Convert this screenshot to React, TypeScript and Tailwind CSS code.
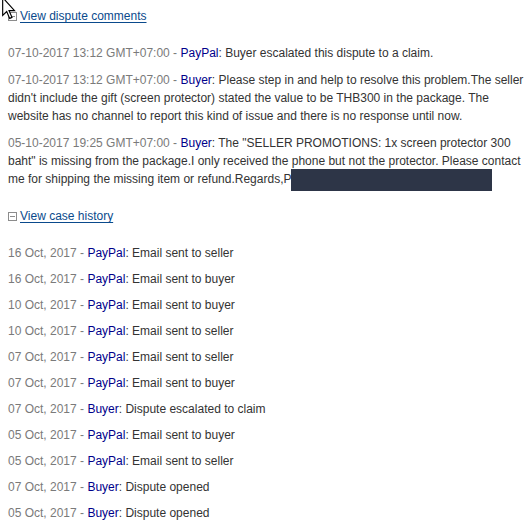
import React from 'react';

type Entry = { date: string; who: 'PayPal' | 'Buyer'; text: string };

const COMMENTS: Entry[] = [
  { date: '07-10-2017 13:12 GMT+07:00', who: 'PayPal', text: 'Buyer escalated this dispute to a claim.' },
  {
    date: '07-10-2017 13:12 GMT+07:00',
    who: 'Buyer',
    text: 'Please step in and help to resolve this problem.The seller didn\'t include the gift (screen protector) stated the value to be THB300 in the package. The website has no channel to report this kind of issue and there is no response until now.',
  },
];

const HISTORY: Entry[] = [
  { date: '16 Oct, 2017', who: 'PayPal', text: 'Email sent to seller' },
  { date: '16 Oct, 2017', who: 'PayPal', text: 'Email sent to buyer' },
  { date: '10 Oct, 2017', who: 'PayPal', text: 'Email sent to buyer' },
  { date: '10 Oct, 2017', who: 'PayPal', text: 'Email sent to seller' },
  { date: '07 Oct, 2017', who: 'PayPal', text: 'Email sent to seller' },
  { date: '07 Oct, 2017', who: 'PayPal', text: 'Email sent to buyer' },
  { date: '07 Oct, 2017', who: 'Buyer', text: 'Dispute escalated to claim' },
  { date: '05 Oct, 2017', who: 'PayPal', text: 'Email sent to buyer' },
  { date: '05 Oct, 2017', who: 'PayPal', text: 'Email sent to seller' },
  { date: '07 Oct, 2017', who: 'Buyer', text: 'Dispute opened' },
  { date: '05 Oct, 2017', who: 'Buyer', text: 'Dispute opened' },
];

const Prefix: React.FC<{ e: Entry }> = ({ e }) => (
  <>
    <span className="text-[#7a7a7a]">{e.date} - </span>
    <span className="text-[#00008b]">{e.who}</span>
    <span>: </span>
  </>
);

const ToggleLink: React.FC<{ label: string }> = ({ label }) => (
  <div className="flex items-center h-[18px]">
    <span className="w-[9px] h-[9px] border border-[#8c8c8c] bg-white flex items-center justify-center mr-[3px]">
      <span className="w-[5px] h-px bg-[#8c8c8c]" />
    </span>
    <a href="#" className="text-[#0a4a8c] underline underline-offset-[2px]">{label}</a>
  </div>
);

const Cursor: React.FC = () => (
  <svg className="absolute left-[2px] top-[-3px]" width="14" height="23" viewBox="0 0 12 20">
    <path d="M0.5 0.5 L0.5 16 L4 12.6 L6.6 18.6 L8.6 17.7 L6 11.8 L10.8 11.8 Z" fill="#fff" stroke="#000" strokeWidth="1" strokeLinejoin="miter" />
  </svg>
);

export default function App() {
  return (
    <div className="relative w-[532px] h-[521px] overflow-hidden bg-white text-[12px] leading-[18px] text-[#333] font-['Liberation_Sans',Arial,sans-serif] pl-2 pr-1 pt-[7px]">
      <Cursor />
      <ToggleLink label="View dispute comments" />

      <div className="mt-[19px]">
        {COMMENTS.map((c, i) => (
          <p key={i} className="mb-[9px]">
            <Prefix e={c} />
            {c.text}
          </p>
        ))}
        <p>
          <Prefix e={{ date: '05-10-2017 19:25 GMT+07:00', who: 'Buyer', text: '' }} />
          The "SELLER PROMOTIONS: 1x screen protector 300 baht" is missing from the package.I only received the phone but not the protector. Please contact me for shipping the missing item or refund.Regards,P
          <span className="inline-block align-top w-[201px] h-[22px] -mt-[1px] bg-[#2d3547]" />
        </p>
      </div>

      <div className="mt-[16px]">
        <ToggleLink label="View case history" />
      </div>

      <ul className="mt-[19px]">
        {HISTORY.map((h, i) => (
          <li key={i} className="mb-2">
            <Prefix e={h} />
            {h.text}
          </li>
        ))}
      </ul>
    </div>
  );
}
